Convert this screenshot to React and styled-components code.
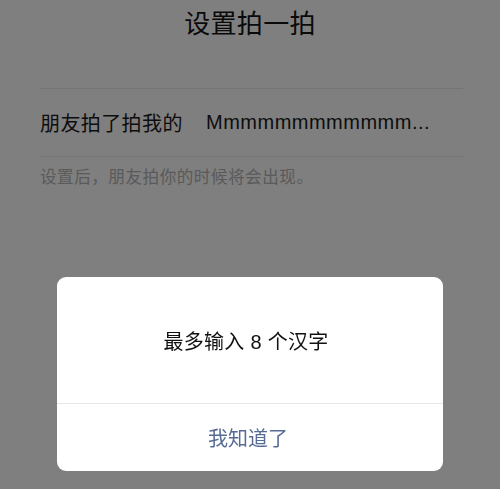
import React from "react";
import styled, { createGlobalStyle } from "styled-components";

const GlobalStyle = createGlobalStyle`
  html, body {
    margin: 0;
    padding: 0;
    background: #ffffff;
  }
  body {
    font-family: "Liberation Sans", "Noto Sans CJK SC", sans-serif;
    -webkit-font-smoothing: antialiased;
  }
`;

const Page = styled.div`
  width: 500px;
  height: 489px;
  background: #ffffff;
  overflow: hidden;
`;

const Title = styled.h1`
  margin: 0;
  height: 48px;
  line-height: 48px;
  text-align: center;
  font-size: 26px;
  font-weight: 400;
  letter-spacing: 0.3px;
  color: #141414;
`;

const Section = styled.div`
  margin: 40px 37px 0 40px;
`;

const Divider = styled.div`
  height: 1px;
  background: #e9e9e9;
`;

const Row = styled.div`
  display: flex;
  align-items: center;
  height: 67px;
  font-size: 20px;
  color: #1a1a1a;
`;

const Label = styled.span`
  width: 166px;
  flex-shrink: 0;
  letter-spacing: 0.4px;
`;

const Value = styled.span`
  white-space: nowrap;
  letter-spacing: 0.5px;
`;

const Hint = styled.p`
  margin: 0;
  padding-top: 11px;
  font-size: 16.6px;
  line-height: 20px;
  letter-spacing: 0.5px;
  color: #b4b4b4;
`;

const Overlay = styled.div`
  position: fixed;
  inset: 0;
  background: rgba(0, 0, 0, 0.5);
  display: flex;
  justify-content: center;
  align-items: flex-start;
  padding-top: 277px;
`;

const Dialog = styled.div`
  width: 386px;
  background: #ffffff;
  border-radius: 9px;
  overflow: hidden;
`;

const Message = styled.div`
  height: 126px;
  display: flex;
  align-items: center;
  justify-content: center;
  padding-right: 8px;
  font-size: 20px;
  letter-spacing: 0.3px;
  color: #111111;
  border-bottom: 1px solid #e6e6e6;
`;

const ActionButton = styled.button`
  display: block;
  width: 100%;
  height: 67px;
  padding: 0 4px 0 0;
  border: 0;
  background: transparent;
  font-family: inherit;
  font-size: 20px;
  color: ${(p) => p.$color || "#576b95"};
  cursor: pointer;
`;

export default function App() {
  return (
    <>
      <GlobalStyle />
      <Page>
        <Title>设置拍一拍</Title>
        <Section>
          <Divider />
          <Row>
            <Label>朋友拍了拍我的</Label>
            <Value>Mmmmmmmmmmmm...</Value>
          </Row>
          <Divider />
          <Hint>设置后，朋友拍你的时候将会出现。</Hint>
        </Section>
      </Page>
      <Overlay>
        <Dialog>
          <Message>最多输入 8 个汉字</Message>
          <ActionButton>我知道了</ActionButton>
        </Dialog>
      </Overlay>
    </>
  );
}
